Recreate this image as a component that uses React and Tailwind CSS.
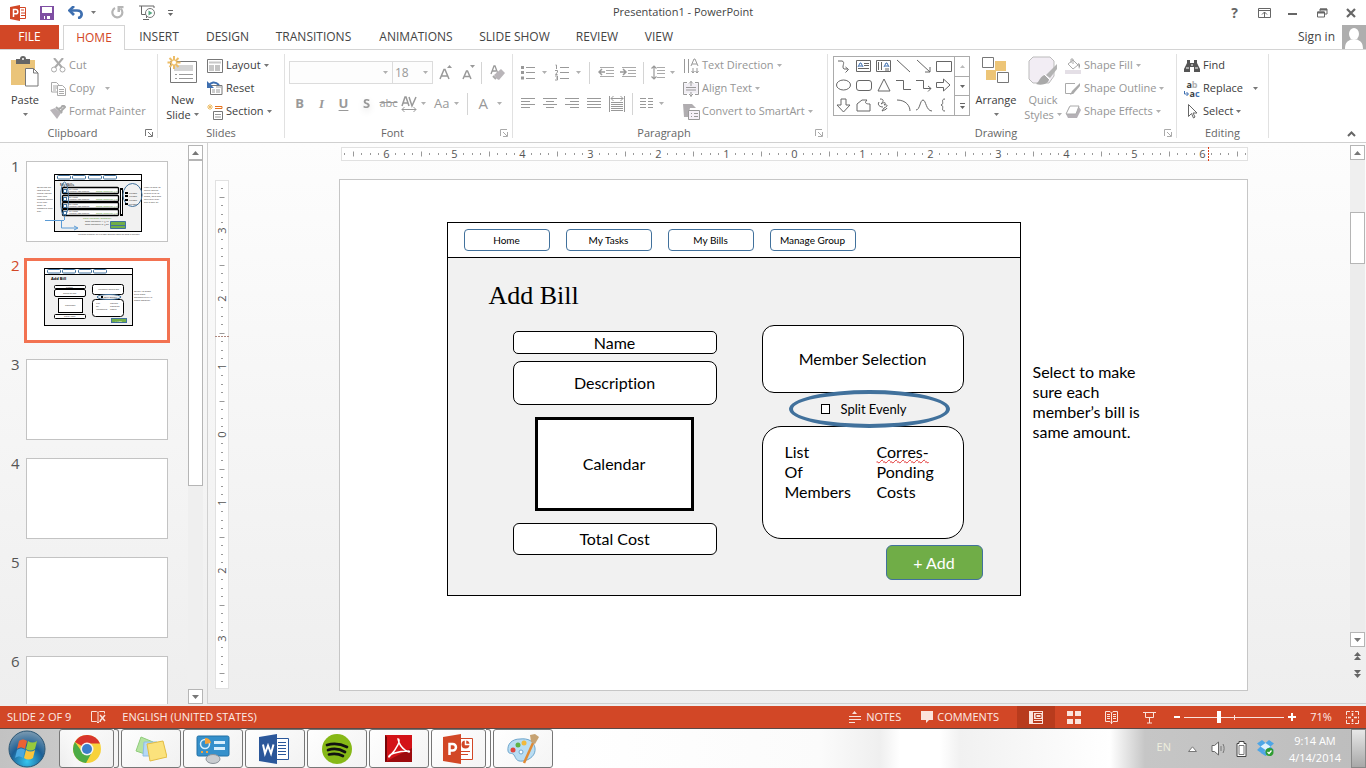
import React from "react";

const Svg = ({ w, h, className = "", children, ...rest }) => (
  <svg width={w} height={h} viewBox={`0 0 ${w} ${h}`} fill="none" aria-hidden="true" className={`shrink-0 ${className}`} {...rest}>
    {children}
  </svg>
);

const Caret = ({ color = "#777" }) => (
  <Svg w={5} h={3}>
    <path d="M0 0h5L2.500 3z" fill={color} />
  </Svg>
);

const Sep = () => <span className="h-[22px] w-px shrink-0 bg-[#d4d4d4]" />;

/* ---------- Title bar ---------- */

const AppIcon = () => (
  <Svg w={17} h={16}>
    <path d="M9 2.500h6.500v11H9" fill="#fff" stroke="#d24726" />
    <path d="M11 5h3M11 8h4M11 10.500h4" stroke="#d24726" />
    <path d="M0 2l10-2v16L0 14z" fill="#d24726" />
    <path d="M3.500 12V4.500h2.200a2 2 0 0 1 0 4.300H3.500" stroke="#fff" strokeWidth="1.500" />
  </Svg>
);

function TitleBar() {
  return (
    <header className="flex h-[25px] shrink-0 items-center bg-white">
      <div className="flex flex-1 items-center pl-[10px]">
        <AppIcon />
        <button aria-label="Save" className="ml-[13px]">
          <Svg w={14} h={14}>
            <path d="M0 0h14v14H0z" fill="#7f4fa3" />
            <path d="M2 1h10v6H2zM4 10h6v3H4z" fill="#fff" />
            <path d="M5 10h2v3H5z" fill="#7f4fa3" />
          </Svg>
        </button>
        <button aria-label="Undo" className="ml-[14px] flex items-center gap-2">
          <Svg w={15} h={13}>
            <path d="M2 4.500h7c6 0 6 7 1 7.500" stroke="#3e6fb0" strokeWidth="2.700" />
            <path d="M6 0L1.500 4.500 6 9" stroke="#3e6fb0" strokeWidth="2.700" />
          </Svg>
          <Caret />
        </button>
        <button aria-label="Repeat" className="ml-[15px]">
          <Svg w={13} h={13}>
            <path d="M4 2A5 5 0 1 0 9.500 2.500" stroke="#b5b5b5" strokeWidth="2.200" />
            <path d="M6.500 0h6v2.200h-3.500V6H6.500z" fill="#b5b5b5" />
          </Svg>
        </button>
        <button aria-label="Start slide show" className="ml-[15px]">
          <Svg w={17} h={16}>
            <path d="M0 1h15M2.500 1v8.500H7M15 1v2M7.500 10v3M4 14.500h6" stroke="#666" />
            <circle cx="11" cy="8" r="4.500" fill="#fff" stroke="#777" />
            <path d="M9.500 5.500v5l4-2.500z" fill="#59a984" />
          </Svg>
        </button>
        <button aria-label="Customize toolbar" className="ml-[12px]">
          <Svg w={5} h={6}>
            <path d="M0 .5h5" stroke="#666" />
            <path d="M0 3h5L2.500 6z" fill="#666" />
          </Svg>
        </button>
      </div>
      <h1 className="text-[11px] text-[#444]">Presentation1 - PowerPoint</h1>
      <div className="flex flex-1 items-center justify-end pr-[10px] text-[#666]">
        <button aria-label="Help" className="mr-5 text-[14px] font-bold leading-4">?</button>
        <button aria-label="Ribbon display options" className="mr-[17px]">
          <Svg w={13} h={10}>
            <path d="M.5.5h12v9H.5zM.5 2.500h12M6.500 9V4M4 6.500L6.500 4 9 6.500" stroke="#666" />
          </Svg>
        </button>
        <button aria-label="Minimize" className="mr-[19px]">
          <Svg w={10} h={10}><path d="M0 6h9" stroke="#666" strokeWidth="2" /></Svg>
        </button>
        <button aria-label="Restore" className="mr-[18px]">
          <Svg w={11} h={10}>
            <path d="M.5 4v5h7V4zM3 3V1h7v5H8" stroke="#666" />
            <path d="M.5 4.500h7M3 1.500h7" stroke="#666" strokeWidth="2" />
          </Svg>
        </button>
        <button aria-label="Close">
          <Svg w={10} h={10}><path d="M1 1l8 8M9 1L1 9" stroke="#666" strokeWidth="2.200" /></Svg>
        </button>
      </div>
    </header>
  );
}

/* ---------- Tabs ---------- */

const TABS = [
  ["INSERT", "w-[68px]"],
  ["DESIGN", "w-[69px]"],
  ["TRANSITIONS", "w-[103px]"],
  ["ANIMATIONS", "w-[102px]"],
  ["SLIDE SHOW", "w-[95px]"],
  ["REVIEW", "w-[70px]"],
  ["VIEW", "w-[54px]"],
];

function Tabs() {
  return (
    <nav aria-label="Ribbon tabs" className="flex h-[25px] shrink-0 border-b border-[#d4d4d4] bg-white text-[12px] text-[#444]">
      <button className="w-[59px] bg-[#d24726] text-white">FILE</button>
      <button className="-mb-px ml-1 w-[62px] border border-b-0 border-[#d4d4d4] bg-white text-[#d24726]">HOME</button>
      {TABS.map(([label, width]) => (
        <button key={label} className={`whitespace-nowrap ${width}`}>{label}</button>
      ))}
      <div className="ml-auto flex items-center gap-[7px]">
        <button>Sign in</button>
        <Svg w={24} h={24}>
          <path d="M0 0h24v24H0z" fill="#aeaeae" />
          <ellipse cx="12" cy="9" rx="5" ry="6" fill="#fff" />
          <path d="M3 24c0-7 3-8 6-9.500h6c3 1.500 6 2.500 6 9.500z" fill="#fff" />
        </Svg>
      </div>
    </nav>
  );
}

/* ---------- Ribbon ---------- */

const I = {
  paste: (
    <Svg w={30} h={31}>
      <path d="M1 4h24v25H1z" fill="#eac47a" />
      <path d="M6 3h4a3 3 0 0 1 6 0h4v5H6z" fill="#666" />
      <circle cx="13" cy="3" r="1" fill="#fff" />
      <path d="M15.500 12.500h8l4.500 4.500v13H15.500z" fill="#fff" stroke="#777" />
      <path d="M23.500 12.500V17H28" stroke="#777" />
    </Svg>
  ),
  cut: (
    <Svg w={15} h={15}>
      <path d="M3 0l8 9.500M12 0L4 9.500" stroke="#aaa" strokeWidth="2" />
      <circle cx="3" cy="11.500" r="2.500" stroke="#aaa" />
      <circle cx="11.500" cy="11.500" r="2.500" stroke="#aaa" />
    </Svg>
  ),
  copy: (
    <Svg w={15} h={14}>
      <path d="M.5.500h5l2 2v7.500h-7z" stroke="#aaa" />
      <path d="M2 4h4M2 6h4M2 8h3" stroke="#aaa" />
      <path d="M6.500 3.500h5l3 3v7h-8z" fill="#fff" stroke="#aaa" />
      <path d="M8 7.500h5M8 9.500h5M8 11.500h5" stroke="#aaa" />
    </Svg>
  ),
  painter: (
    <Svg w={16} h={14}>
      <path d="M0 5l5-2 6 5-4 6z" fill="#b9b5b9" />
      <path d="M6 2l6 6M8 4l3-1 2-3 2 2-3 3-1 3" stroke="#aaa" strokeWidth="2" />
    </Svg>
  ),
  newSlide: (
    <Svg w={31} h={29}>
      <path d="M3.500 5.500h26v21h-26z" fill="#fff" stroke="#777" />
      <path d="M7 9h19v6H7z" fill="#d4d4d4" />
      <path d="M8 18.500h2M12 18.500h14M8 22.500h2M12 22.500h14" stroke="#999" />
      <path d="M7 0v13M.5 6.500h13M2.500 2l9 9M11.500 2l-9 9" stroke="#edbd67" strokeWidth="2" />
      <circle cx="7" cy="6.500" r="2" fill="#fff" />
    </Svg>
  ),
  layout: (
    <Svg w={16} h={14}>
      <path d="M.5.500h15v13H.5z" stroke="#777" />
      <path d="M2 2.500h12v2H2zM2 6h5v6H2z" fill="#c8c8c8" />
      <path d="M8 7h5M8 9h5M8 11h5" stroke="#888" />
    </Svg>
  ),
  reset: (
    <Svg w={16} h={15}>
      <path d="M3.500 4.500h11.500v9H3.500z" stroke="#777" />
      <path d="M9 6h5M5 9h3M5 11h3M9 9h4M9 11h4" stroke="#999" />
      <path d="M1 5c3-4 7-5 11-1" stroke="#3e6fb0" strokeWidth="2" />
      <path d="M0 0v7h7z" fill="#3e6fb0" />
    </Svg>
  ),
  section: (
    <Svg w={16} h={16}>
      <path d="M8 2.500h7v2H8" stroke="#e5731f" />
      <path d="M6.500 7.500h9v8h-9z" stroke="#777" />
      <path d="M8 10.500h6M8 13h6" stroke="#999" />
      <path d="M3 0v6M0 3h6M1 1l4 4M5 1L1 5" stroke="#edbd67" />
    </Svg>
  ),
  growFont: (
    <Svg w={14} h={15}>
      <path d="M1 14L5 4.500h1L10 14M2.500 11h6" stroke="#999" strokeWidth="1.500" />
      <path d="M8 3h5l-2.500-3z" fill="#999" />
    </Svg>
  ),
  shrinkFont: (
    <Svg w={14} h={15}>
      <path d="M1 14L4.500 6h1L9 14M2.500 11.500h5" stroke="#999" strokeWidth="1.500" />
      <path d="M8 0h5l-2.500 3z" fill="#999" />
    </Svg>
  ),
  clearFmt: (
    <Svg w={15} h={15}>
      <path d="M1 9L4 1h1l3 8M2 6h4" stroke="#999" strokeWidth="1.300" />
      <path d="M4 10l7-6 4 4-6 7-2-1z" fill="#b9b5b9" />
      <path d="M3 11l3 3" stroke="#aaa" strokeWidth="2" />
    </Svg>
  ),
  spacing: (
    <Svg w={16} h={17}>
      <path d="M1 11L4 2h1l3 9M2.500 8h4M8 2l3 9 4-9" stroke="#999" strokeWidth="1.500" />
      <path d="M1 14.500h14M3.500 12L1 14.500 3.500 17M12.500 12l2.500 2.500-2.500 2.500" stroke="#999" />
    </Svg>
  ),
  bullets: (
    <Svg w={15} h={15}>
      <path d="M0 1h3v3H0zM0 6h3v3H0zM0 11.500h3v3H0z" fill="#999" />
      <path d="M5 2.500h9M5 7.500h9M5 13.500h9" stroke="#999" />
    </Svg>
  ),
  numbers: (
    <Svg w={15} h={17}>
      <path d="M5 3.500h9M5 8.500h9M5 14.500h9" stroke="#999" />
      <path d="M.5 1h1v4M0 6.500h2.500V8L.5 10.500h2M0 12h2.500v4H0M1 14h1.500" stroke="#999" />
    </Svg>
  ),
  outdent: (
    <Svg w={16} h={11}>
      <path d="M2 .5h14M8 3.500h8M8 6.500h8M2 9.500h14" stroke="#aaa" />
      <path d="M1 5h6M4 2L1 5l3 3" stroke="#999" strokeWidth="1.500" />
    </Svg>
  ),
  indent: (
    <Svg w={16} h={11}>
      <path d="M2 .5h14M8 3.500h8M8 6.500h8M2 9.500h14" stroke="#aaa" />
      <path d="M0 5h6M3 2l3 3-3 3" stroke="#999" strokeWidth="1.500" />
    </Svg>
  ),
  lineSpacing: (
    <Svg w={15} h={15}>
      <path d="M6 2.500h8M6 5.500h8M6 8.500h8M6 12.500h8" stroke="#aaa" />
      <path d="M3 1v13M.5 3.500L3 1l2.500 2.500M.5 11.500L3 14l2.500-2.500" stroke="#999" strokeWidth="1.200" />
    </Svg>
  ),
  left: <Svg w={15} h={11}><path d="M0 .5h14M0 3.500h9M0 6.500h14M0 9.500h9" stroke="#999" /></Svg>,
  center: <Svg w={15} h={11}><path d="M0 .5h14M3 3.500h8M0 6.500h14M3 9.500h8" stroke="#999" /></Svg>,
  right: <Svg w={15} h={11}><path d="M0 .5h14M5 3.500h9M0 6.500h14M5 9.500h9" stroke="#999" /></Svg>,
  justify: <Svg w={15} h={11}><path d="M0 .5h14M0 3.500h14M0 6.500h14M0 9.500h14" stroke="#999" /></Svg>,
  distribute: (
    <Svg w={16} h={16}>
      <path d="M.5 0v16M15.500 0v16M2 6.500h12M2 8.500h12M2 10.500h12M2 12.500h12M2 14.500h12M2 2.500h12M4.500 0L2 2.500 4.500 5M11.500 0L14 2.500 11.500 5" stroke="#999" />
    </Svg>
  ),
  columns: <Svg w={13} h={11}><path d="M0 .5h6M0 3.500h6M0 6.500h6M0 9.500h6M8 .5h5M8 3.500h5M8 6.500h5M8 9.500h5" stroke="#999" /></Svg>,
  textDir: (
    <Svg w={16} h={16}>
      <path d="M1.500 1v14M5.500 1v14M10 10v5M14 10v5M8.500 13l1.500 2 1.500-2M12.500 13l1.500 2 1.500-2M8 8l3-7h1l3 7M9 6h5" stroke="#999" />
    </Svg>
  ),
  alignText: (
    <Svg w={16} h={16}>
      <path d="M1 2.500h14v10H1z" fill="#f1eef4" />
      <path d="M4 1.500H.5v12H4M12 1.500h3.500v12H12M3 6.500h10M3 9h10M8 0v5M6 2.500L8 .5l2 2M8 11v5M6 13l2 2 2-2" stroke="#999" />
    </Svg>
  ),
  smartArt: (
    <Svg w={17} h={16}>
      <path d="M0 0h9l4 4H7l-2 9H1z" fill="#b0adb0" />
      <path d="M5.500 6.500h11v9h-11z" fill="#f6f0f8" stroke="#999" />
      <path d="M8 9.500h1M11 9.500h4M8 12.500h1M11 12.500h4" stroke="#999" />
    </Svg>
  ),
  arrange: (
    <Svg w={28} h={28}>
      <path d="M13 5h11v10H13zM4 14h10v10H4z" fill="#edc577" />
      <path d="M.5 1.500h11v10H.5zM15.500 16.500h11v10h-11z" fill="#fff" stroke="#777" />
    </Svg>
  ),
  quick: (
    <Svg w={30} h={30}>
      <path d="M5 1h17l4 4v15l-5 7H5l-4-4V5z" fill="#f2edf4" stroke="#bbb" />
      <path d="M29 8L18 19l4 3 7-9z" fill="#b3b3b3" />
      <path d="M17 19c-5 1-5 6-9 9 7 2 13-1 13-5z" fill="#a9a9a9" />
      <path d="M16 18l6 6" stroke="#fff" />
    </Svg>
  ),
  fill: (
    <Svg w={16} h={16}>
      <path d="M3 6l5-4 5 5-5 4zM6 5V1h2v5" stroke="#aaa" fill="#fff" />
      <path d="M13 5c3 1 2 4 1 6z" fill="#999" />
      <path d="M0 12h16v4H0z" fill="#e4dfe6" />
    </Svg>
  ),
  outline: (
    <Svg w={16} h={14}>
      <path d="M10 1.500H.5v10h8" stroke="#aaa" />
      <path d="M15 1L7 9l-2 4 4-2 6-7z" fill="#aaa" />
    </Svg>
  ),
  effects: (
    <Svg w={16} h={14}>
      <path d="M4 2h10l2 3-4 8H3L1 9z" fill="#b5b1b6" />
      <path d="M5 1h9l-3 8H1z" fill="#fff" stroke="#aaa" />
    </Svg>
  ),
  find: (
    <Svg w={16} h={14}>
      <path d="M3 1h3v3h4V1h3v3l3 6v3h-6V8H6v5H0v-3l3-6z" fill="#555" />
      <path d="M2 9h3M11 9h3M7 6h2" stroke="#fff" />
    </Svg>
  ),
  select: (
    <Svg w={16} h={15}>
      <path d="M4.500.5v12l3-3 2 4.500 1.500-1-2-4h4z" stroke="#666" fill="#fff" />
    </Svg>
  ),
};

const Cmd = ({ icon, label, caret = true, wide = false, muted = false }) => (
  <button className={`flex h-[23px] items-center gap-[3px] whitespace-nowrap ${muted ? "text-[#959595]" : "text-[#3c3c3c]"}`}>
    <span className="flex w-4 justify-center">{icon}</span>
    <span>{label}</span>
    {caret && <span className={wide ? "ml-[7px]" : ""}><Caret color={muted ? "#b0b0b0" : "#777"} /></span>}
  </button>
);

const Big = ({ icon, lines, muted = false, className = "" }) => (
  <button className={`flex h-[69px] flex-col items-center pt-[2px] leading-[15px] ${muted ? "text-[#959595]" : "text-[#3c3c3c]"} ${className}`}>
    <span className="flex h-[36px] items-start">{icon}</span>
    <span>{lines[0]}</span>
    <span className="flex h-[15px] items-center gap-[3px]">
      {lines[1]}
      <Caret color={muted ? "#b0b0b0" : "#777"} />
    </span>
  </button>
);

function Group({ title, width, launcher = "none", children }) {
  return (
    <section aria-label={title} className={`flex h-[84px] shrink-0 flex-col border-r border-[#e1e1e1] ${width}`}>
      <div className="flex h-[74px]">{children}</div>
      <div className="flex h-[10px] items-center">
        <span className="flex-1 text-center leading-[10px] text-[#666]">{title}</span>
        {launcher !== "none" && (
          <button aria-label={`${title} options`} className="mr-1">
            <Svg w={8} h={8}>
              <path d="M.5 7V.5H7M3 3l4 4M7.500 3v4.500H3" stroke={launcher} />
            </Svg>
          </button>
        )}
      </div>
    </section>
  );
}

const SHAPES = [
  ["Curved connector", <path d="M2 2h4c4 1-1 6 2 8h4M9.500 8l3 2.500-3 3" />],
  ["Text box", <g><path d="M.5 1.500h14v11H.5zM8 4.500h5M8 6.500h5M2 9.500h11" /><path d="M2 8l2-4h1l2 4M3 7h3" stroke="#3e6fb0" /></g>],
  ["Vertical text box", <g><path d="M.5 1.500h14v11H.5zM2.500 3v8M5.500 3v8M10 9v3M12 9v3" /><path d="M8 8l2-4h1l2 4M9 7h3" stroke="#3e6fb0" /></g>],
  ["Line", <path d="M1 1l13 12" />],
  ["Arrow", <path d="M1 1l13 12M14 8v5H9" />],
  ["Rectangle", <path d="M.5 2.500h15v10H.5z" />],
  ["Oval", <ellipse cx="7.500" cy="7" rx="7" ry="5" />],
  ["Rounded rectangle", <rect x=".5" y="2.500" width="15" height="10" rx="2.500" />],
  ["Triangle", <path d="M8 1l6 12H2z" />],
  ["Elbow connector", <path d="M0 2.500h7.500v9H15" />],
  ["Elbow arrow", <path d="M0 2.500h7.500v8H15M12 8l3 2.500-3 3" />],
  ["Right arrow", <path d="M.5 4.500h7V1L14 7l-6.500 6V9.500h-7z" />],
  ["Down arrow", <path d="M5 1h5v6h4l-6.500 7L1 7h4z" />],
  ["Freeform", <path d="M1 13V6l5-4h5c-3 3-1 4 3 4v7z" />],
  ["Scribble", <path d="M4 1c5 0 3 3 1 5 3-2 6-2 3 1 3-1 5 1 0 3l-2 3c2-1 4-1 5-3M3 4c-2 3 1 5 4 5" />],
  ["Arc", <path d="M1 2c9 0 13 6 13 11" />],
  ["Curve", <path d="M0 12c4 0 4-10 7-10s3 11 9 11" />],
  ["Brace", <path d="M9 1c-5 0 0 5-4 6 4 1-1 6 4 6" />],
];

function Ribbon() {
  return (
    <div className="flex h-[93px] shrink-0 border-b border-[#d0d0d0] bg-white pt-1 text-[11px]">
      <Group title="Clipboard" width="w-[158px]" launcher="#777">
        <Big icon={I.paste} lines={["Paste", ""]} className="w-[50px]" />
        <div>
          <Cmd icon={I.cut} label="Cut" caret={false} muted />
          <Cmd icon={I.copy} label="Copy" wide muted />
          <Cmd icon={I.painter} label="Format Painter" caret={false} muted />
        </div>
      </Group>
      <Group title="Slides" width="w-[127px]">
        <Big icon={I.newSlide} lines={["New", "Slide"]} className="w-[49px]" />
        <div>
          <Cmd icon={I.layout} label="Layout" />
          <Cmd icon={I.reset} label="Reset" caret={false} />
          <Cmd icon={I.section} label="Section" />
        </div>
      </Group>
      <Group title="Font" width="w-[228px]" launcher="#aaa">
        <div className="flex-1 pl-1 pt-[7px] text-[#999]">
          <div className="flex h-[23px] items-center text-[12px]">
            <label className="flex h-full w-[104px] shrink-0 items-center border border-[#dcdcdc] bg-[#fdfdfd] pr-1">
              <select aria-label="Font" defaultValue="" className="min-w-0 flex-1 appearance-none bg-transparent"><option value="" /></select>
              <Caret color="#b0b0b0" />
            </label>
            <label className="flex h-full w-[40px] shrink-0 items-center border border-l-0 border-[#dcdcdc] bg-[#fdfdfd] pl-[2px] pr-1">
              <select aria-label="Font size" className="min-w-0 flex-1 appearance-none bg-transparent"><option>18</option></select>
              <Caret color="#b0b0b0" />
            </label>
            <button aria-label="Grow font" className="ml-[6px]">{I.growFont}</button>
            <button aria-label="Shrink font" className="ml-[9px]">{I.shrinkFont}</button>
            <span className="ml-[5px] mr-2 flex"><Sep /></span>
            <button aria-label="Clear formatting">{I.clearFmt}</button>
          </div>
          <div className="mt-2 flex h-[23px] items-center text-[13px]">
            <button className="w-[21px] font-bold">B</button>
            <button className="w-[23px] font-['Liberation_Serif',serif] font-bold italic">I</button>
            <button className="w-[21px] font-bold underline underline-offset-2">U</button>
            <button className="w-[25px] font-bold drop-shadow-md">S</button>
            <button className="w-[19px] text-[11px] line-through">abc</button>
            <button aria-label="Character spacing" className="ml-[3px] flex items-center gap-[4px]">{I.spacing}<Caret color="#b0b0b0" /></button>
            <button className="ml-2 flex items-center gap-[5px]">Aa<Caret color="#b0b0b0" /></button>
            <span className="ml-2 mr-[10px] flex"><Sep /></span>
            <button className="flex items-center gap-[9px] text-[15px]">A<Caret color="#b0b0b0" /></button>
          </div>
        </div>
      </Group>
      <Group title="Paragraph" width="w-[315px]" launcher="#aaa">
        <div className="w-[170px] pl-2 pt-[7px]">
          <div className="flex h-[23px] items-center">
            <button aria-label="Bullets" className="flex items-center gap-[6px]">{I.bullets}<Caret color="#b0b0b0" /></button>
            <button aria-label="Numbering" className="ml-2 flex items-center gap-[6px]">{I.numbers}<Caret color="#b0b0b0" /></button>
            <span className="mx-2 flex"><Sep /></span>
            <button aria-label="Decrease indent">{I.outdent}</button>
            <button aria-label="Increase indent" className="ml-[6px]">{I.indent}</button>
            <span className="mx-[7px] flex"><Sep /></span>
            <button aria-label="Line spacing" className="flex items-center gap-[4px]">{I.lineSpacing}<Caret color="#b0b0b0" /></button>
          </div>
          <div className="mt-2 flex h-[23px] items-center gap-[7px]">
            <button aria-label="Align left">{I.left}</button>
            <button aria-label="Center">{I.center}</button>
            <button aria-label="Align right">{I.right}</button>
            <button aria-label="Justify">{I.justify}</button>
            <button aria-label="Distribute">{I.distribute}</button>
            <Sep />
            <button aria-label="Columns" className="flex items-center gap-[6px]">{I.columns}<Caret color="#b0b0b0" /></button>
          </div>
        </div>
        <div>
          <Cmd icon={I.textDir} label="Text Direction" muted />
          <Cmd icon={I.alignText} label="Align Text" muted />
          <Cmd icon={I.smartArt} label="Convert to SmartArt" muted />
        </div>
      </Group>
      <Group title="Drawing" width="w-[349px]" launcher="#aaa">
        <div className="ml-[5px] mt-[2px] flex h-[60px] w-[137px] border border-[#ababab]">
          <div className="grid flex-1 grid-cols-6 grid-rows-3">
            {SHAPES.map(([name, shape]) => (
              <button key={name} aria-label={name} className="flex items-center justify-center">
                <Svg w={16} h={15} stroke="#666">{shape}</Svg>
              </button>
            ))}
          </div>
          <div className="flex w-[15px] flex-col divide-y divide-[#ababab] border-l border-[#ababab]">
            <button aria-label="Previous shapes" className="flex flex-1 items-center justify-center"><Svg w={5} h={3}><path d="M0 3h5L2.500 0z" fill="#bbb" /></Svg></button>
            <button aria-label="Next shapes" className="flex flex-1 items-center justify-center"><Caret color="#666" /></button>
            <button aria-label="All shapes" className="flex flex-1 items-center justify-center"><Svg w={5} h={6}><path d="M0 .5h5" stroke="#666" /><path d="M0 3h5L2.500 6z" fill="#666" /></Svg></button>
          </div>
        </div>
        <Big icon={I.arrange} lines={["Arrange", ""]} className="w-[52px]" />
        <Big icon={I.quick} lines={["Quick", "Styles"]} muted className="w-[42px]" />
        <div className="pl-px">
          <Cmd icon={I.fill} label="Shape Fill" muted />
          <Cmd icon={I.outline} label="Shape Outline" muted />
          <Cmd icon={I.effects} label="Shape Effects" muted />
        </div>
      </Group>
      <Group title="Editing" width="w-[92px]">
        <div className="pl-[7px]">
          <Cmd icon={I.find} label="Find" caret={false} />
          <Cmd
            icon={
              <span className="flex flex-col text-[9px] font-bold leading-[9px]">
                <span>a<span className="text-[#b0b0b0]">b</span></span>
                <span className="flex items-center">
                  <Svg w={5} h={5}><path d="M.5 0v3H4M2.500 1L4.500 3l-2 2" stroke="#3e6fb0" /></Svg>
                  a<span className="text-[#3e6fb0]">c</span>
                </span>
              </span>
            }
            label="Replace"
            wide
          />
          <Cmd icon={I.select} label="Select" />
        </div>
      </Group>
      <button aria-label="Collapse the ribbon" className="ml-auto self-end pb-[5px] pr-[10px]">
        <Svg w={9} h={6}><path d="M1 5l3.500-3.500L8 5" stroke="#666" strokeWidth="2" /></Svg>
      </button>
    </div>
  );
}

/* ---------- Slide panel ---------- */

const T = ({ x, y, children, c = "#333", s = 2.5 }) => (
  <text x={x} y={y} fontSize={s} fill={c}>{children}</text>
);

const ThumbNav = ({ x, y }) => (
  <g fill="#fff" stroke="#41719c" strokeWidth="1">
    {[0, 15, 31, 46].map((d) => <rect key={d} x={x + d} y={y} width="13" height="3.500" rx="1" />)}
  </g>
);

const Thumb1 = () => (
  <Svg w={140} h={79} className="w-full">
    <rect x="27.500" y="12.500" width="87" height="57" fill="#f1f1f1" stroke="#000" />
    <path d="M27.500 12.500h87v6h-87z" fill="#fff" stroke="#000" />
    <ThumbNav x={30.500} y={13.500} />
    <T x={33} y={24} s={4} c="#000">My Bills</T>
    {[25.5, 33.5, 40.5, 47.5].map((y) => (
      <g key={y}>
        <rect x="35.500" y={y} width="56" height="6" rx="1" fill="#fff" stroke="#000" strokeWidth="1.300" />
        <rect x="36.500" y={y + 2} width="3" height="3" stroke="#41719c" />
        <T x={42} y={y + 2.500} s={2}>Bill Name</T>
        <T x={42} y={y + 4.800} s={2}>Member cost amount</T>
        <T x={69} y={y + 4} c="#5a9a33">Owes member $15</T>
      </g>
    ))}
    <path d="M94.500 26v28" stroke="#000" strokeWidth="3" />
    <path d="M94.500 28v24" stroke="#fff" />
    <ellipse cx="37.500" cy="37" rx="4" ry="17" stroke="#41719c" />
    <ellipse cx="105.500" cy="33" rx="9.500" ry="11.500" stroke="#41719c" />
    {[32, 35, 39, 43].map((y) => <g key={y}><path d={`M98 ${y - 2}h3v2h-3z`} fill="#000" /><T x={102} y={y}>Person</T></g>)}
    <path d="M37.500 58v-3M18 58.500h19M34.500 59v7H50M47 64l4 2-4 2" stroke="#5b9bd5" />
    <T x={56} y={57} c="#5a9a33">Total Payment Summary</T>
    <T x={58} y={60}>Owe member 1: $15</T>
    <T x={58} y={63}>Owe member 2: $20</T>
    <path d="M83.500 59.500h15v7h-15z" fill="#70ad47" stroke="#41719c" />
    <path d="M84 63.500h15" stroke="#41719c" />
    {["Selecting an", "row paying", "check-boxes", "user can", "choose which", "bills they", "want to", "compute and", "pay"].map((t, i) => <T key={t} x={10} y={26 + i * 3}>{t}</T>)}
    {["User is able to", "select which", "group bills to", "show, and add", "multiple they", "are a part of"].map((t, i) => <T key={t} x={117} y={26 + i * 3}>{t}</T>)}
    <T x={51} y={72.500} s={2}>Payment summary of bills total appears based on what is selected</T>
  </Svg>
);

const Thumb2 = () => (
  <Svg w={140} h={79} className="w-full">
    <g stroke="#000" fill="#fff">
      <rect x="17.500" y="7.500" width="88" height="57" fill="#f1f1f1" />
      <path d="M17.500 7.500h88v6h-88z" />
      <rect x="27.500" y="24.500" width="31" height="3" rx="1" />
      <rect x="27.500" y="28.500" width="31" height="7" rx="1.500" />
      <rect x="31.500" y="37.500" width="24" height="14" />
      <rect x="27.500" y="53.500" width="31" height="4" rx="1" />
      <rect x="65.500" y="23.500" width="31" height="10" rx="2" />
      <rect x="65.500" y="38.500" width="31" height="17" rx="3" />
    </g>
    <ThumbNav x={20.500} y={8.500} />
    <ellipse cx="82" cy="36" rx="12" ry="2.500" fill="#f1f1f1" stroke="#41719c" />
    <text x="24" y="19" fontSize="4" fontWeight="bold" fill="#000">Add Bill</text>
    <T x={39} y={26.800}>Name</T>
    <T x={36} y={32.500}>Description</T>
    <T x={38} y={45}>Calendar</T>
    <T x={37} y={56.300}>Total Cost</T>
    <T x={71} y={29}>Member Selection</T>
    <path d="M74 35h2v2h-2z" fill="#000" />
    <T x={77} y={37}>Split Evenly</T>
    <T x={69} y={43}>List</T><T x={69} y={46}>Of</T><T x={69} y={49}>Members</T>
    <T x={83} y={43}>Corres-</T><T x={83} y={46}>Ponding</T><T x={83} y={49}>Costs</T>
    <rect x="84.500" y="57.500" width="15" height="4" fill="#70ad47" stroke="#41719c" />
    <T x={88} y={60.500} c="#fff">+ Add</T>
    {["Select to make", "sure each", "member’s bill is", "same amount."].map((t, i) => <T key={t} x={107} y={31 + i * 3}>{t}</T>)}
  </Svg>
);

const ArrowButton = ({ label, up = false }) => (
  <button aria-label={label} className="flex h-[15px] shrink-0 items-center justify-center border border-[#b5b5b5] bg-white">
    <Svg w={7} h={4}><path d={up ? "M0 4h7L3.500 0z" : "M0 0h7L3.500 4z"} fill="#777" /></Svg>
  </button>
);

function SlidePanel() {
  return (
    <aside aria-label="Slides" className="flex w-[203px] shrink-0">
      <ol className="flex-1 overflow-hidden pt-[18px] text-[15px] text-[#555]">
        {[1, 2, 3, 4, 5, 6].map((n) => {
          const active = n === 2;
          return (
            <li key={n} className="flex h-[99px] items-start">
              <span className={`w-[26px] shrink-0 pl-[11px] leading-[10px] ${active ? "text-[#d24726]" : ""}`}>{n}</span>
              <button
                aria-label={`Slide ${n}`}
                className={`flex h-[81px] w-[142px] overflow-hidden border bg-white ${active ? "border-[#f27251] ring-2 ring-[#f27251]" : "border-[#c3c3c3]"}`}
              >
                {n === 1 && <Thumb1 />}
                {n === 2 && <Thumb2 />}
              </button>
            </li>
          );
        })}
      </ol>
      <div className="mt-[2px] flex w-[15px] flex-col bg-[#efefef]">
        <ArrowButton up label="Scroll slides up" />
        <div className="h-[326px] border border-[#b5b5b5] bg-white" />
        <div className="flex-1" />
        <ArrowButton label="Scroll slides down" />
      </div>
    </aside>
  );
}

/* ---------- Editor ---------- */

const INCH = 68;

function Ruler({ length, vertical = false, marker }) {
  const mid = length / 2;
  const max = Math.floor(mid / (INCH / 8));
  const ticks = [];
  for (let i = -max; i <= max; i += 1) ticks.push(i);
  const label = (i) => Math.abs(i / 8);
  const body = ticks.map((i) => {
    const p = mid + (i * INCH) / 8;
    if (i % 8 === 0) {
      return vertical ? (
        <text key={i} transform={`translate(11 ${p}) rotate(-90)`} textAnchor="middle" fontSize="11" fill="#555">{label(i)}</text>
      ) : (
        <text key={i} x={p} y="11" textAnchor="middle" fontSize="11" fill="#555">{label(i)}</text>
      );
    }
    const half = i % 4 === 0 ? 2.5 : 1;
    return vertical ? (
      <path key={i} d={`M${7 - half} ${Math.round(p) + 0.5}h${half * 2}`} stroke="#999" />
    ) : (
      <path key={i} d={`M${Math.round(p) + 0.5} ${7 - half}v${half * 2}`} stroke="#999" />
    );
  });
  return (
    <Svg w={vertical ? 14 : length} h={vertical ? length : 14}>
      <rect x=".5" y=".5" width={(vertical ? 14 : length) - 1} height={(vertical ? length : 14) - 1} fill="#fff" stroke="#e1e1e1" />
      {body}
      <path
        d={vertical ? `M0 ${marker + 0.5}h14` : `M${marker + 0.5} 0v14`}
        stroke={vertical ? "#b0897f" : "#e03c14"}
        strokeDasharray="2 1"
      />
    </Svg>
  );
}

const box = "absolute flex items-center justify-center border border-black bg-white";

function Slide() {
  return (
    <article className="relative mt-[18px] h-[512px] w-[909px] shrink-0 border border-[#c6c6c6] bg-white font-['Lato',sans-serif] text-[16px] leading-5 text-black [font-variant-ligatures:none]">
      <div className="absolute left-[107px] top-[42px] h-[374px] w-[574px] border border-black bg-[#f1f1f1]">
        <div className="flex h-[35px] gap-4 border-b border-black bg-white pl-4 pt-[6px]">
          {["Home", "My Tasks", "My Bills", "Manage Group"].map((t) => (
            <button key={t} className="h-[22px] w-[86px] rounded-[4px] border border-[#41719c] text-[10px] leading-4">{t}</button>
          ))}
        </div>
      </div>
      <h2 className="absolute left-[149px] top-[100px] font-['Liberation_Serif',serif] text-[26px] leading-8">Add Bill</h2>
      <div className={`${box} left-[173px] top-[151px] h-[23px] w-[204px] rounded-[5px]`}>Name</div>
      <div className={`${box} left-[173px] top-[181px] h-[44px] w-[204px] rounded-[8px]`}>Description</div>
      <div className="absolute left-[195px] top-[237px] flex h-[94px] w-[159px] items-center justify-center border-3 border-black bg-white">Calendar</div>
      <div className={`${box} left-[173px] top-[343px] h-[32px] w-[204px] rounded-[6px]`}>Total Cost</div>
      <div className={`${box} left-[422px] top-[145px] h-[68px] w-[202px] rounded-[12px]`}>Member Selection</div>
      <div className="absolute left-[422px] top-[246px] flex h-[113px] w-[202px] rounded-[19px] border border-black bg-white pl-[22px] pt-[15px]">
        <p className="w-[92px]">List<br />Of<br />Members</p>
        <p>
          <span className="underline decoration-[#e03030] decoration-wavy decoration-1 underline-offset-1">Corres-</span>
          <br />Ponding<br />Costs
        </p>
      </div>
      <label className="absolute left-[449px] top-[210px] flex h-[38px] w-[161px] items-center gap-[11px] rounded-[50%] border-4 border-[#41719c] pl-7 text-[13px]">
        <input type="checkbox" className="h-[10px] w-[9px] appearance-none border border-black bg-white" />
        Split Evenly
      </label>
      <button className="absolute left-[546px] top-[365px] h-[35px] w-[97px] rounded-[6px] border border-[#41719c] bg-[#70ad47] text-white">+ Add</button>
      <p className="absolute left-[693px] top-[182px] w-[120px]">Select to make sure each member’s bill is same amount.</p>
    </article>
  );
}

function Editor() {
  return (
    <main className="ml-1 flex min-w-0 flex-1 border-b border-l border-[#d0d0d0]">
      <div className="pl-[7px] pt-[37px]"><Ruler vertical length={509} marker={156} /></div>
      <div className="flex min-w-0 flex-1 flex-col items-center overflow-hidden pl-[7px] pt-[4px]">
        <div className="pl-[2px]"><Ruler length={907} marker={867} /></div>
        <Slide />
      </div>
      <div className="mr-px mt-[2px] flex w-[15px] flex-col">
        <ArrowButton up label="Scroll up" />
        <div className="h-[52px] bg-[#efefef]" />
        <div className="h-[52px] border border-[#b5b5b5] bg-white" />
        <div className="flex-1 bg-[#ececec]" />
        <ArrowButton label="Scroll down" />
        <button aria-label="Previous slide" className="flex h-[18px] items-center justify-center">
          <Svg w={7} h={8}><path d="M0 4h7L3.500 0zM0 8h7L3.500 4z" fill="#666" /></Svg>
        </button>
        <button aria-label="Next slide" className="mb-5 flex h-[18px] items-center justify-center">
          <Svg w={7} h={8}><path d="M0 0h7L3.500 4zM0 4h7L3.500 8z" fill="#666" /></Svg>
        </button>
      </div>
    </main>
  );
}

/* ---------- Status bar ---------- */

function StatusBar() {
  return (
    <footer className="flex h-[22px] shrink-0 items-center bg-[#d24726] pl-[7px] text-[11px] text-[#fdebe6]">
      <span>SLIDE 2 OF 9</span>
      <button aria-label="Spelling" className="ml-5">
        <Svg w={15} h={13}>
          <path d="M7 1.500L5.500.5H.5v10h5L7 12l1.500-1.500H10M7 2v10M7 1.500L8.500.5h5v2" stroke="#fbe3dc" />
          <path d="M9 4l5 6M14 4l-5 6" stroke="#fbe3dc" strokeWidth="1.500" />
        </Svg>
      </button>
      <button className="ml-4">ENGLISH (UNITED STATES)</button>
      <div className="ml-auto flex h-full items-center">
        <button className="mr-5 flex items-center gap-[5px]">
          <Svg w={12} h={12}>
            <path d="M0 5.500h12M0 8.500h12M0 11.500h6" stroke="#fbe3dc" />
            <path d="M3 3h5L5.500 0z" fill="#fbe3dc" />
          </Svg>
          NOTES
        </button>
        <button className="mr-[18px] flex items-center gap-1">
          <Svg w={12} h={12}><path d="M0 0h12v9H8l-3 3V9H0z" fill="#fbe3dc" /></Svg>
          COMMENTS
        </button>
        <button aria-label="Normal view" className="flex h-full w-[38px] items-center justify-center bg-[#b83b1d]">
          <Svg w={14} h={13}>
            <path d="M0 0h14v13H0z" fill="#fbe3dc" />
            <path d="M4.500 1v11M5 8.500h8M7 3.500h5v3H7z" stroke="#b83b1d" />
            <path d="M5 1h8v1H5zM5 10h8v2H5z" fill="#b83b1d" />
          </Svg>
        </button>
        <button aria-label="Slide sorter" className="flex w-[38px] justify-center">
          <Svg w={14} h={13}><path d="M0 0h6v5H0zM8 0h6v5H8zM0 8h6v5H0zM8 8h6v5H8z" fill="#fbe3dc" /></Svg>
        </button>
        <button aria-label="Reading view" className="flex w-[37px] justify-center">
          <Svg w={13} h={13}>
            <path d="M.5.5H5L6.500 2 8 .5h4.500v10H8L6.500 12 5 10.500H.5zM6.500 2v11M2 3.500h3M2 5.500h3M2 7.500h3M8 3.500h3M8 5.500h3M8 7.500h3" stroke="#fbe3dc" />
          </Svg>
        </button>
        <button aria-label="Slide show" className="flex w-[38px] justify-center">
          <Svg w={13} h={13}><path d="M0 1.500h13M2.500 1.500v5h8v-5M6.500 7v5M4 12h5" stroke="#fbe3dc" /></Svg>
        </button>
        <button aria-label="Zoom out" className="ml-[6px] flex w-4 items-center"><Svg w={6} h={2}><path d="M0 1h6" stroke="#fff" strokeWidth="2" /></Svg></button>
        <input
          type="range"
          aria-label="Zoom"
          defaultValue={34}
          className="-ml-[6px] h-4 w-[100px] appearance-none bg-[linear-gradient(#fbe3dc,#fbe3dc),linear-gradient(#fbe3dc,#fbe3dc)] bg-[length:100%_1px,1px_5px] bg-center bg-no-repeat [&::-webkit-slider-thumb]:h-3 [&::-webkit-slider-thumb]:w-1 [&::-webkit-slider-thumb]:appearance-none [&::-webkit-slider-thumb]:bg-white"
        />
        <button aria-label="Zoom in" className="ml-[4px]"><Svg w={8} h={8}><path d="M0 4h8M4 0v8" stroke="#fff" strokeWidth="2" /></Svg></button>
        <button className="ml-[14px] w-[22px] whitespace-nowrap">71%</button>
        <button aria-label="Fit slide to window" className="ml-[14px] mr-[7px]">
          <Svg w={13} h={13}>
            <path d="M.5 4V.5H4M9 .5h3.500V4M12.500 9v3.500H9M4 12.500H.5V9M5.500.5h2M5.500 12.500h2M.5 5.500v2M12.500 5.500v2" stroke="#fbe3dc" />
            <path d="M6.500 2v3M6.500 8v3M2 6.500h3M8 6.500h3" stroke="#fbe3dc" strokeWidth="1.500" />
          </Svg>
        </button>
      </div>
    </footer>
  );
}

/* ---------- Taskbar ---------- */

const APPS = [
  ["Chrome", true, (
    <Svg w={30} h={30}>
      <circle cx="15" cy="15" r="14" fill="#f7d23c" />
      <path d="M15 15L2.900 8A14 14 0 0 1 28 9.500H15z" fill="#d8352c" />
      <path d="M2.900 8A14 14 0 0 0 14 29l6-11-9.500.5z" fill="#4cab46" />
      <circle cx="15" cy="15" r="6.500" fill="#f4f4f4" />
      <circle cx="15" cy="15" r="5" fill="#3b7fcb" />
    </Svg>
  )],
  ["Sticky Notes", false, (
    <Svg w={32} h={28}>
      <path d="M6 2l12 5-5 13L1 16z" fill="#b5e3a1" stroke="#8fcc7b" />
      <path d="M9 7h13v14H8z" fill="#b5d8f5" stroke="#8fbde5" />
      <path d="M12 9l16-3 4 16-17 4z" fill="#fbe27c" stroke="#e2bc43" />
    </Svg>
  )],
  ["Control Panel", false, (
    <Svg w={34} h={30}>
      <rect x="1" y="2" width="32" height="20" rx="1.500" fill="#3590cb" stroke="#2270a5" />
      <circle cx="9" cy="10" r="4.500" stroke="#d7effc" strokeWidth="1.500" />
      <path d="M9 10V4a6 6 0 0 1 6 5z" fill="#f3a33b" />
      <path d="M18 7h11v3H18zM18 13h11v3H18z" fill="#d7effc" />
      <path d="M5 18h2M10 18h2" stroke="#f3a33b" strokeWidth="2" />
      <ellipse cx="17" cy="25" rx="7" ry="4.500" fill="#c9ccd0" stroke="#8c9299" />
    </Svg>
  )],
  ["Word", false, (
    <Svg w={32} h={30}>
      <path d="M16 4.500h13.500v21H16" fill="#fff" stroke="#2b579a" />
      <path d="M19 8.500h8M19 11.500h8M19 14.500h8M19 17.500h8M19 20.500h8" stroke="#2b579a" />
      <path d="M0 3l18-3v30L0 27z" fill="#2b579a" />
      <path d="M4 10.500l2 9 3-8 3 8 2.500-9" stroke="#fff" strokeWidth="2" />
    </Svg>
  )],
  ["Spotify", false, (
    <Svg w={30} h={30}>
      <circle cx="15" cy="15" r="15" fill="#86b817" />
      <path d="M5 11c7-2 14-1 20 2M6 16c6-2 12-1 17 2M7 20.500c5-1 9-1 14 1.500" stroke="#111" strokeWidth="2.700" strokeLinecap="round" />
    </Svg>
  )],
  ["Adobe Reader", false, (
    <Svg w={30} h={30}>
      <path d="M1 1h27v27H1z" fill="#d31217" />
      <path d="M1 28l27-14v14z" fill="#9d0b0e" />
      <path d="M1 1l2 2v24l-2 1z" fill="#770508" />
      <path d="M14 5c3 0 0 9-9 18-2-2 8-6 20-6 3 3-9-1-11-12z" stroke="#fff" strokeWidth="1.400" />
    </Svg>
  )],
  ["PowerPoint", true, (
    <Svg w={32} h={30}>
      <path d="M16 4.500h13.500v21H16" fill="#fff" stroke="#d24726" />
      <circle cx="22.500" cy="10.500" r="4" fill="#d24726" />
      <path d="M22.500 6v4.500H27" stroke="#fff" strokeWidth="1.500" />
      <path d="M18 17.500h9M18 20.500h7" stroke="#d24726" />
      <path d="M0 3l18-3v30L0 27z" fill="#d24726" />
      <path d="M6.500 21V10h3.200a3 3 0 0 1 0 6.500H6.500" stroke="#fff" strokeWidth="2.500" />
    </Svg>
  )],
  ["Paint", false, (
    <Svg w={34} h={31}>
      <path d="M14 6C6 6 1 11 2 18c1 4 4 1 6 4s2 7 9 6 13-6 12-13S22 5 14 6z" fill="#b9ddf3" stroke="#6fa6cc" />
      <circle cx="7" cy="17" r="2.500" fill="#e0473f" />
      <circle cx="12" cy="12" r="2.500" fill="#5fb346" />
      <circle cx="18" cy="10" r="2.500" fill="#f2b93b" />
      <circle cx="15" cy="19" r="2" fill="#fff" stroke="#6fa6cc" />
      <path d="M27 10l-9 20" stroke="#e08a35" strokeWidth="2.500" />
      <path d="M24 2l5-1 4 3-4 7-4-2z" fill="#c7a373" />
    </Svg>
  )],
];

function Taskbar() {
  return (
    <div className="flex h-10 shrink-0 border-t border-[#5b4a48] bg-[linear-gradient(90deg,#c2c2c2_0,#c8c8c8_59px,#f4f4f4_75px,#ffffff_560px,#fbfbfb_820px,#efefef_880px,#ffffff_900px,#ffffff_940px,#f1f1f1_960px,#ffffff_1110px,#c6c6c6_1145px,#bdbdbd_100%)]">
      <button aria-label="Start" className="flex w-[59px] items-center pl-2">
        <Svg w={38} h={38}>
          <defs>
            <radialGradient id="orb" cx=".5" cy=".85" r=".9">
              <stop offset="0" stopColor="#35c6ef" />
              <stop offset=".5" stopColor="#1c5f95" />
              <stop offset="1" stopColor="#8aa3b5" />
            </radialGradient>
          </defs>
          <circle cx="19" cy="19" r="18" fill="url(#orb)" stroke="#2b5674" />
          <path d="M11 11c3-2 5-2 8 0l-2 8c-3-2-5-2-8 0z" fill="#ea6233" />
          <path d="M20 11c3 2 6 2 9 0l-2 8c-3 2-6 2-9 0z" fill="#97c93d" />
          <path d="M9 20c3-2 5-2 8 0l-2 8c-3-2-5-2-8 0z" fill="#4aa8e0" />
          <path d="M18 20c3 2 6 2 9 0l-2 8c-3 2-6 2-9 0z" fill="#fbc53a" />
        </Svg>
      </button>
      <div className="flex gap-[2px]">
        {APPS.map(([name, stacked, icon]) => (
          <button key={name} aria-label={name} className="flex w-[60px]">
            <span className="flex h-full flex-1 items-center justify-center rounded-[3px] border border-[#777] bg-[linear-gradient(135deg,#ffffffdd,#ececec88)]">{icon}</span>
            {stacked && <span className="h-full w-[5px] rounded-r-[3px] border border-l-0 border-[#777]" />}
          </button>
        ))}
      </div>
      <div className="ml-auto flex items-center text-[11px] leading-[17px] text-white">
        <button className="mr-[17px] pb-1 text-[#eeeede]">EN</button>
        <button aria-label="Show hidden icons"><Svg w={9} h={6}><path d="M.5 5.500h8L4.500.8z" fill="#fff" stroke="#777" /></Svg></button>
        <Svg w={14} h={15} className="ml-[14px]">
          <path d="M1 4.500h2.500L7.500 1v13l-4-3.500H1z" fill="#fff" stroke="#666" />
          <path d="M10 5v5M12 3c1.500 3 1.500 6 0 9" stroke="#777" />
        </Svg>
        <Svg w={11} h={16} className="ml-[11px]">
          <path d="M3 .5h5v2h2v13H1v-13h2z" fill="#fff" stroke="#444" />
          <path d="M3 4.500h5v9H3z" stroke="#777" />
        </Svg>
        <Svg w={17} h={17} className="ml-[10px]">
          <path d="M5 0l3.500 3L12 0l5 3.500-3.500 3L17 10l-5 3.500L8.500 10 5 13.500 0 10l3.500-3.500L0 3.500z" fill="#4ea6e6" />
          <path d="M8.500 3l5 3.500-5 3.500-5-3.500z" fill="#dff1fd" />
          <path d="M4 13l4.500-2 4.500 2-4.500 3z" fill="#4ea6e6" />
          <circle cx="12.500" cy="12" r="4" fill="#2f9c31" />
          <path d="M10.500 12l1.500 1.500 2.500-3" stroke="#fff" strokeWidth="1.300" />
        </Svg>
        <time className="ml-2 w-[66px] whitespace-nowrap text-center">9:14 AM<br />4/14/2014</time>
        <button aria-label="Show desktop" className="ml-[3px] h-[39px] w-[15px] border border-[#888] bg-gradient-to-b from-[#e8e8e8] to-[#a8a8a8]" />
      </div>
    </div>
  );
}

export default function App() {
  return (
    <div className="flex h-screen flex-col overflow-hidden bg-white font-['Open_Sans','Noto_Sans',sans-serif]">
      <TitleBar />
      <Tabs />
      <Ribbon />
      <div className="flex min-h-0 flex-1 bg-gradient-to-b from-[#fdfdfd] to-[#eeeeee] pb-[2px]">
        <SlidePanel />
        <Editor />
      </div>
      <StatusBar />
      <Taskbar />
    </div>
  );
}
